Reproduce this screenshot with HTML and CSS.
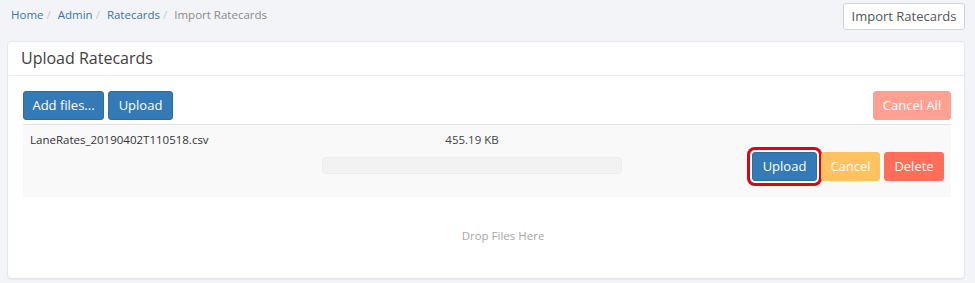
FILE: index.html
```html
<!DOCTYPE html>
<html>
<head>
<meta charset="utf-8">
<link rel="stylesheet" href="styles.css">
</head>
<body>
<div class="topbar">
  <nav class="crumbs">
    <a class="crumb-link">Home</a><span class="sep">/</span>
    <a class="crumb-link">Admin</a><span class="sep">/</span>
    <a class="crumb-link">Ratecards</a><span class="sep">/</span>
    <span class="crumb-active">Import Ratecards</span>
  </nav>
  <button class="btn btn-default">Import Ratecards</button>
</div>
<div class="panel">
  <div class="panel-heading">Upload Ratecards</div>
  <div class="panel-body">
    <div class="toolbar">
      <div class="toolbar-left">
        <button class="btn btn-primary btn-add">Add files...</button>
        <button class="btn btn-primary btn-up">Upload</button>
      </div>
      <button class="btn btn-danger btn-disabled btn-cancelall">Cancel All</button>
    </div>
    <div class="file-row">
      <div class="col-name">LaneRates_20190402T110518.csv</div>
      <div class="col-size">
        <div class="size">455.19 KB</div>
        <div class="progress"></div>
      </div>
      <div class="col-actions">
        <button class="btn btn-primary btn-up highlight">Upload</button>
        <button class="btn btn-warning btn-cancel">Cancel</button>
        <button class="btn btn-danger btn-delete">Delete</button>
      </div>
    </div>
    <div class="dropzone">Drop Files Here</div>
  </div>
</div>
</body>
</html>
```
FILE: styles.css
```css
* { box-sizing: border-box; }
html, body { margin: 0; padding: 0; }
body {
  background: #f3f4f8;
  font-family: "Open Sans", "Liberation Sans", sans-serif;
  font-size: 12px;
  color: #333;
  width: 975px;
  height: 283px;
  overflow: hidden;
}
.topbar {
  display: flex;
  justify-content: space-between;
  align-items: flex-start;
  height: 41px;
  padding: 3px 10px 0 11px;
}
.crumbs {
  margin-top: 3px;
  line-height: 18px;
  font-size: 11.5px;
  white-space: nowrap;
}
.crumb-link { color: #3a74a8; }
.sep { color: #c8c8c8; padding: 0 4px 0 3px; }
.crumb-active { color: #8a8a8a; }
.btn {
  font-family: "Open Sans", "Liberation Sans", sans-serif;
  font-size: 13px;
  height: 29px;
  line-height: 27px;
  padding: 0 10px;
  border: 1px solid transparent;
  border-radius: 3px;
  color: #fff;
  cursor: pointer;
  margin: 0;
}
.btn-default {
  background: #fff;
  border-color: #d0d3d8;
  color: #555;
  height: 27px;
  line-height: 25px;
  width: 122px;
  padding: 0;
}
.btn-primary { background: #337ab7; border-color: #2e6da4; }
.btn-warning { background: #fec35f; border-color: #fec35f; }
.btn-danger { background: #ff6e59; border-color: #ff6e59; }
.btn-disabled { opacity: 0.65; }
.btn-add { width: 81px; padding: 0; }
.btn-up { width: 65px; padding: 0; }
.btn-cancelall { width: 78px; padding: 0; }
.btn-cancel { width: 59px; padding: 0; }
.btn-delete { width: 60px; padding: 0; }
.panel {
  margin: 0 10px 0 7px;
  height: 238px;
  background: #fff;
  border: 1px solid #e3e6eb;
  border-radius: 4px;
  box-shadow: 0 1px 1px rgba(0,0,0,0.04);
}
.panel-heading {
  height: 34px;
  border-bottom: 1px solid #e6e9ee;
  padding: 0 0 0 13px;
  font-size: 16px;
  line-height: 32px;
  color: #404040;
}
.panel-body {
  padding: 15px 13px 0 15px;
}
.toolbar {
  display: flex;
  justify-content: space-between;
  height: 29px;
  margin-bottom: 4px;
}
.toolbar-left { display: flex; gap: 4px; }
.file-row {
  display: flex;
  height: 73px;
  background: #f9f9f9;
  border-top: 1px solid #e2e2e2;
}
.col-name {
  width: 299px;
  padding: 6px 0 0 7px;
  line-height: 18px;
  font-size: 11.5px;
  color: #333;
}
.col-size {
  width: 300px;
  display: flex;
  flex-direction: column;
  align-items: center;
  padding-top: 6px;
}
.size { line-height: 18px; color: #444; font-size: 11.5px; }
.progress {
  margin-top: 8px;
  width: 300px;
  height: 17px;
  background: #f2f2f2;
  border: 1px solid #ececec;
  border-radius: 4px;
}
.col-actions {
  flex: 1;
  display: flex;
  justify-content: flex-end;
  align-items: flex-start;
  gap: 4px;
  padding: 27px 7px 0 0;
}
.highlight {
  box-shadow: 0 0 0 2px #fff, 0 0 0 5px #e3000f;
}
.dropzone {
  height: 82px;
  display: flex;
  align-items: center;
  justify-content: center;
  padding: 0 0 5px 32px;
  color: #a8a8a8;
  font-size: 11.5px;
}
```
